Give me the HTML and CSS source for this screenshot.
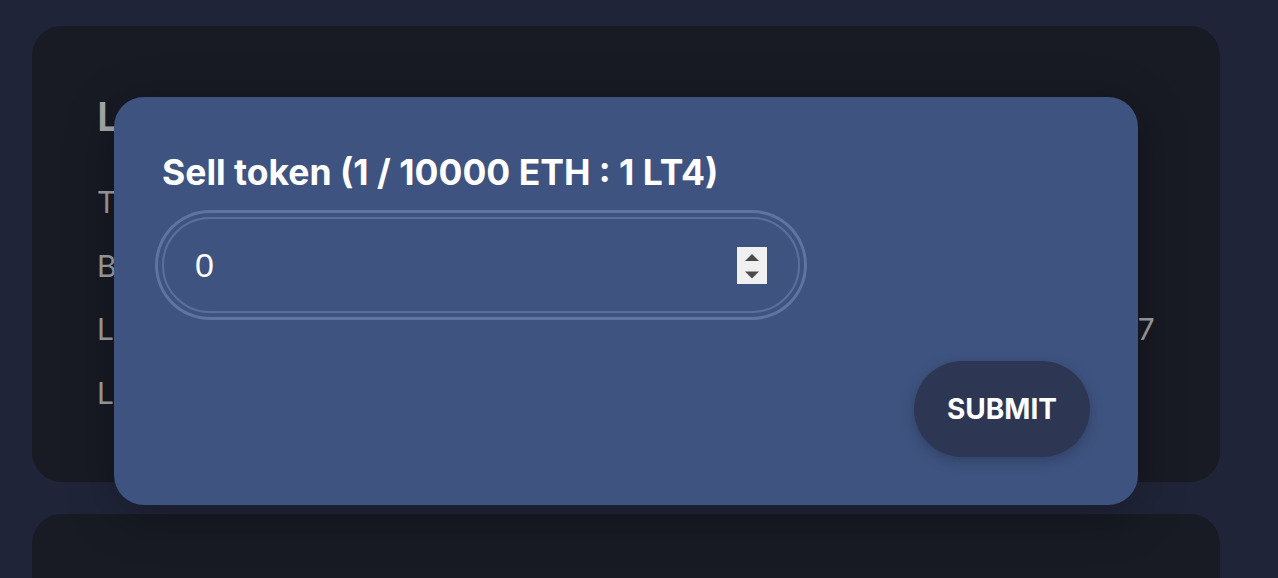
FILE: index.html
```html
<!DOCTYPE html>
<html lang="en">
<head>
<meta charset="utf-8">
<title>Sell token</title>
<link rel="stylesheet" href="styles.css">
</head>
<body>
<main class="page">
  <section class="card">
    <h2 class="card-title">Lottery Token</h2>
    <div class="rows">
      <p class="row">Token name: LT4</p>
      <p class="row">Balance: 0 LT4</p>
      <p class="row">Loan contract address: 0x9fE46736679d2D9a65F0992F2272dE9f3c7fa67</p>
      <p class="row">Loan total supply: 100000</p>
    </div>
  </section>
  <section class="card card-next"></section>

  <div class="modal">
    <h3 class="modal-title">Sell token (1 / 10000 ETH : 1 LT4)</h3>
    <div class="field">
      <input class="field-input" type="text" value="0" aria-label="Amount">
      <span class="spinner">
        <svg width="30" height="37" viewBox="0 0 30 37"><path d="M8 14 L15 7 L22 14 Z" fill="#4a4a4a"/><path d="M8 24.5 L22 24.5 L15 31.5 Z" fill="#4a4a4a"/></svg>
      </span>
    </div>
    <button class="submit" type="button">SUBMIT</button>
  </div>
</main>
</body>
</html>
```

FILE: styles.css
```css
html, body {
  margin: 0;
  padding: 0;
  background: #1f2438;
  height: 100%;
  overflow: hidden;
}

.page {
  position: relative;
  padding: 26px 58px 0 32px;
  display: flex;
  flex-direction: column;
  gap: 32px;
  font-family: Inter, "Liberation Sans", sans-serif;
}

.card {
  background: #181a24;
  border-radius: 30px;
  height: 456px;
  box-sizing: border-box;
  padding: 67px 65px 0 65px;
  overflow: hidden;
  flex-shrink: 0;
}

.card-next {
  height: 200px;
}

.card-title {
  margin: 0;
  font-size: 40px;
  line-height: 48px;
  font-weight: 600;
  color: #a8a8a8;
}

.rows {
  margin-top: 39px;
  display: flex;
  flex-direction: column;
  gap: 18px;
}

.row {
  margin: 0;
  font-size: 30px;
  line-height: 45.5px;
  color: #a0a0a0;
  white-space: nowrap;
}

.modal {
  position: absolute;
  left: 114px;
  top: 97px;
  width: 1024px;
  height: 408px;
  box-sizing: border-box;
  padding: 48px;
  background: #3e5380;
  border-radius: 30px;
  box-shadow: 0 10px 50px rgba(0, 0, 0, 0.25);
  display: flex;
  flex-direction: column;
}

.modal-title {
  margin: 0;
  font-size: 35.5px;
  line-height: 56px;
  font-weight: 700;
  color: #ffffff;
  white-space: nowrap;
}

.field {
  margin-top: 16px;
  width: 638px;
  height: 96px;
  box-sizing: border-box;
  border: 2px solid #5a6f9c;
  border-radius: 48px;
  box-shadow: 0 0 0 4px #3e5380, 0 0 0 7px #5f74a1;
  display: flex;
  align-items: center;
  padding: 0 31px 0 31px;
}

.field-input {
  flex: 1;
  min-width: 0;
  background: transparent;
  border: none;
  outline: none;
  color: #ffffff;
  font-family: "Liberation Sans", Arial, sans-serif;
  font-size: 34px;
  padding: 0;
}

.spinner {
  width: 30px;
  height: 37px;
  background: #f0f0f0;
  display: block;
}

.spinner svg {
  display: block;
}

.submit {
  margin-top: auto;
  align-self: flex-end;
  width: 176px;
  height: 96px;
  border: none;
  border-radius: 48px;
  background: #2d3754;
  color: #ffffff;
  font-family: Inter, "Liberation Sans", sans-serif;
  font-weight: 700;
  font-size: 28px;
  box-shadow: 0 4px 14px rgba(0, 0, 0, 0.22);
  cursor: pointer;
}
```
